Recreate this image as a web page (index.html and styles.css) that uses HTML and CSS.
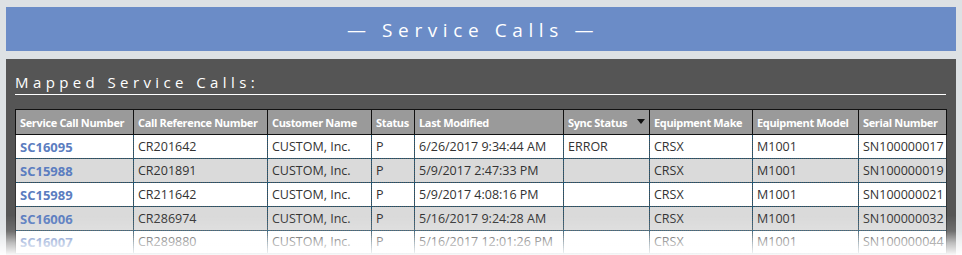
FILE: index.html
```html
<!DOCTYPE html>
<html>
<head>
<meta charset="utf-8">
<link rel="stylesheet" href="styles.css">
</head>
<body>
<div class="page">
  <header class="banner"><h1 class="banner-title">— Service Calls —</h1></header>
  <section class="panel">
    <h2 class="panel-title">Mapped Service Calls:</h2>
    <table class="grid">
      <colgroup>
        <col class="c1"><col class="c2"><col class="c3"><col class="c4"><col class="c5"><col class="c6"><col class="c7"><col class="c8"><col class="c9">
      </colgroup>
      <thead>
        <tr>
          <th>Service Call Number</th>
          <th>Call Reference Number</th>
          <th>Customer Name</th>
          <th>Status</th>
          <th>Last Modified</th>
          <th class="sorted">Sync Status<span class="sort-arrow"></span></th>
          <th>Equipment Make</th>
          <th>Equipment Model</th>
          <th>Serial Number</th>
        </tr>
      </thead>
      <tbody>
        <tr>
          <td><a class="call-link" href="#">SC16095</a></td><td>CR201642</td><td>CUSTOM, Inc.</td><td>P</td><td>6/26/2017 9:34:44 AM</td><td>ERROR</td><td>CRSX</td><td>M1001</td><td>SN100000017</td>
        </tr>
        <tr>
          <td><a class="call-link" href="#">SC15988</a></td><td>CR201891</td><td>CUSTOM, Inc.</td><td>P</td><td>5/9/2017 2:47:33 PM</td><td></td><td>CRSX</td><td>M1001</td><td>SN100000019</td>
        </tr>
        <tr>
          <td><a class="call-link" href="#">SC15989</a></td><td>CR211642</td><td>CUSTOM, Inc.</td><td>P</td><td>5/9/2017 4:08:16 PM</td><td></td><td>CRSX</td><td>M1001</td><td>SN100000021</td>
        </tr>
        <tr>
          <td><a class="call-link" href="#">SC16006</a></td><td>CR286974</td><td>CUSTOM, Inc.</td><td>P</td><td>5/16/2017 9:24:28 AM</td><td></td><td>CRSX</td><td>M1001</td><td>SN100000032</td>
        </tr>
        <tr class="last-row">
          <td><a class="call-link" href="#">SC16007</a></td><td>CR289880</td><td>CUSTOM, Inc.</td><td>P</td><td>5/16/2017 12:01:26 PM</td><td></td><td>CRSX</td><td>M1001</td><td>SN100000044</td>
        </tr>
      </tbody>
    </table>
  </section>
</div>
<div class="fade"></div>
</body>
</html>
```

FILE: styles.css
```css
html, body {
  margin: 0;
  padding: 0;
}
body {
  background: #dde1e4;
  font-family: "Open Sans", "Noto Sans", sans-serif;
  overflow: hidden;
  height: 255px;
}
.page {
  display: flex;
  flex-direction: column;
  gap: 8px;
  padding: 7px 6px 0 6px;
}
.banner {
  background: #6b8cc7;
  height: 44px;
  display: flex;
  align-items: center;
  justify-content: center;
}
.banner-title {
  margin: 0;
  font-weight: normal;
  font-size: 19px;
  letter-spacing: 5.6px;
  color: #ffffff;
  padding-right: 16px;
  line-height: 24px;
  padding-top: 2px;
}
.panel {
  background: #555555;
  padding: 10px 10px 20px 9px;
}
.panel-title {
  margin: 0;
  color: #ffffff;
  font-weight: normal;
  font-size: 15px;
  letter-spacing: 4.4px;
  line-height: 24px;
  border-bottom: 1px solid #ffffff;
  padding-top: 1px;
  height: 24px;
  margin-bottom: 14px;
}
.grid {
  border-collapse: collapse;
  table-layout: fixed;
  width: 931px;
  font-size: 12.5px;
}
.c1 { width: 118px; }
.c2 { width: 134px; }
.c3 { width: 104px; }
.c4 { width: 43px; }
.c5 { width: 149px; }
.c6 { width: 86px; }
.c7 { width: 103px; }
.c8 { width: 106px; }
.c9 { width: 88px; }
.grid th {
  background: #9a9a9a;
  color: #ffffff;
  font-weight: bold;
  font-size: 11px;
  letter-spacing: -0.35px;
  text-align: left;
  border: 1px solid #111111;
  height: 24px;
  padding: 0 4px;
  white-space: nowrap;
  overflow: hidden;
}
.grid th.sorted {
  position: relative;
}
.sort-arrow {
  position: absolute;
  right: 4px;
  top: 9px;
  width: 0;
  height: 0;
  border-left: 4px solid transparent;
  border-right: 4px solid transparent;
  border-top: 5px solid #111111;
}
.grid td {
  height: 23px;
  padding: 0 4px;
  color: #333333;
  border-right: 1px dotted #1c5575;
  border-bottom: 1px dotted #1c5575;
  white-space: nowrap;
  overflow: hidden;
}
.grid td:first-child {
  border-left: 1px solid #333333;
}
.grid td:last-child {
  border-right: 1px solid #333333;
}
.grid tbody tr:nth-child(odd) td { background: #ffffff; }
.grid tbody tr:nth-child(even) td { background: #dadada; }
.grid tbody tr.last-row td {
  height: 20px;
  vertical-align: top;
  padding-top: 2px;
}
.call-link {
  color: #5b7dc0;
  font-weight: bold;
  font-size: 13px;
  text-decoration: none;
}
.fade {
  position: fixed;
  left: 0;
  right: 0;
  bottom: 0;
  height: 40px;
  background: linear-gradient(to bottom, rgba(255,255,255,0) 0%, rgba(255,255,255,0.15) 40%, rgba(255,255,255,0.62) 70%, rgba(255,255,255,0.97) 100%);
  pointer-events: none;
}
```
